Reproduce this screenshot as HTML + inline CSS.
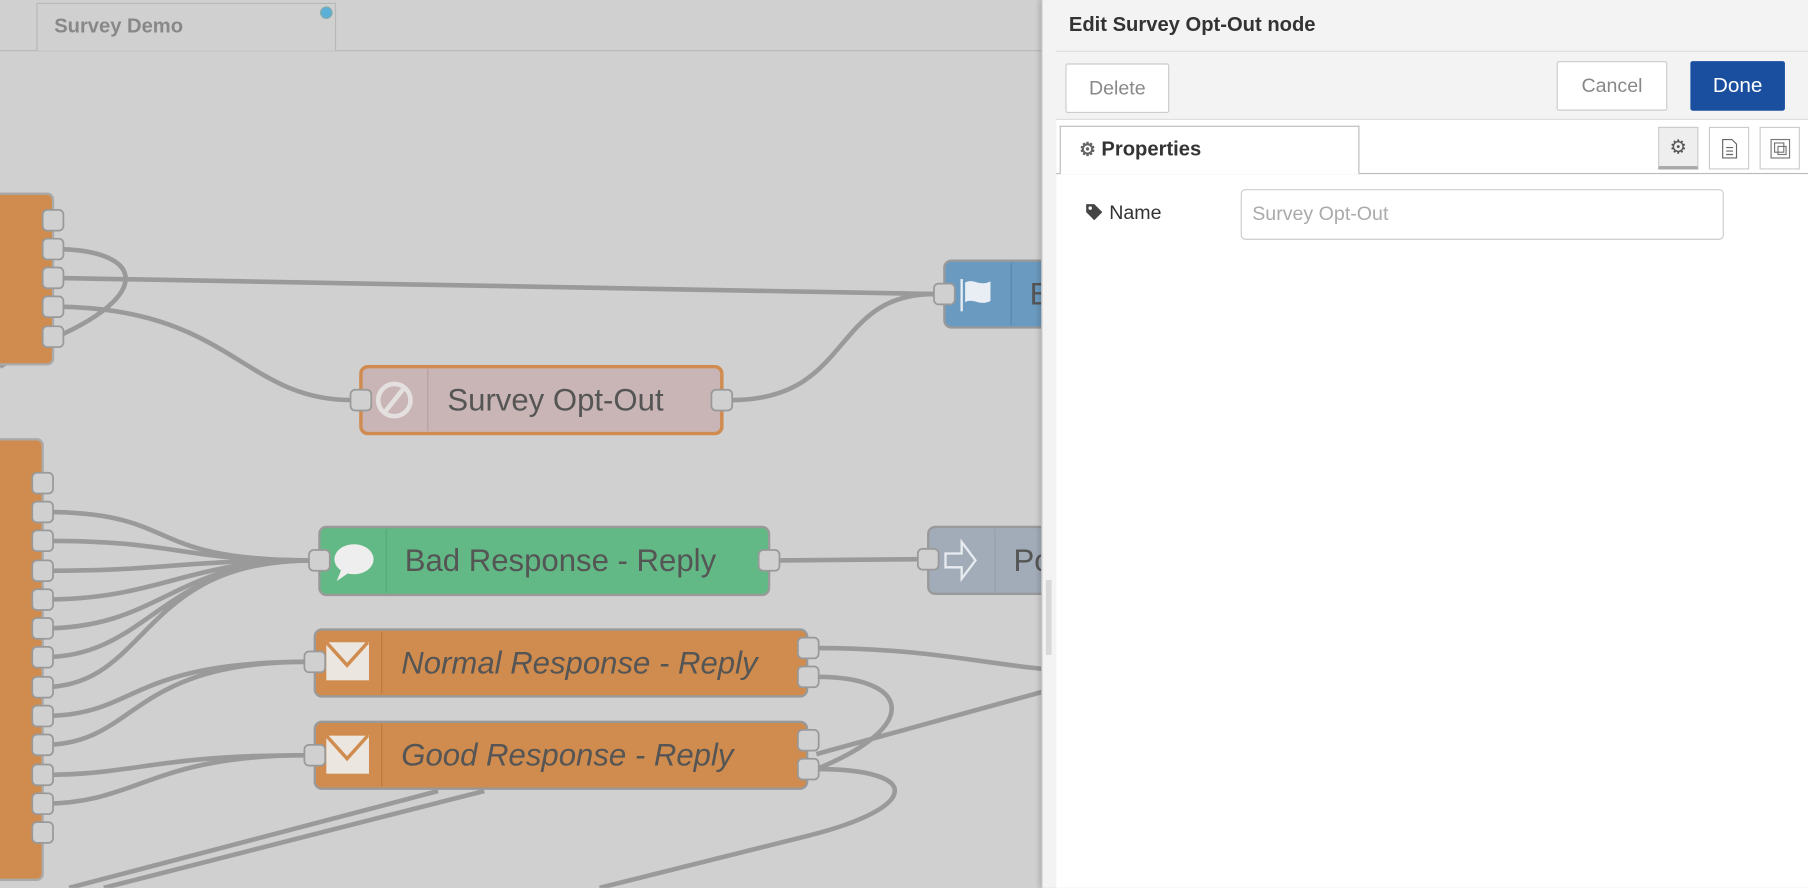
<!DOCTYPE html>
<html><head><meta charset="utf-8"><style>
html,body{margin:0;padding:0;overflow:hidden;width:1808px;height:888px;background:#d0d0d0}
#w{position:absolute;left:0;top:0;width:1568px;height:770px;transform:scale(1.15306);transform-origin:0 0;font-family:"Liberation Sans",sans-serif}
.abs{position:absolute}
.btn{position:absolute;background:#fff;border:1px solid #ccc;box-sizing:border-box;color:#888;font-size:17px;display:flex;align-items:center;justify-content:center;border-radius:2px}
.ib{position:absolute;top:110px;width:35px;height:37px;border:1px solid #ccc;box-sizing:border-box;background:#fff;display:flex;align-items:center;justify-content:center}
</style></head><body><div id="w">
<svg class="abs" style="left:0;top:0" width="904" height="770" viewBox="0 0 904 770">
<rect width="904" height="770" fill="#d0d0d0"/>
<line x1="0" y1="44" x2="904" y2="44" stroke="#b8b8b8"/>
<path d="M32 44V3H291V44" fill="#d0d0d0" stroke="#b8b8b8"/>
<text x="47" y="28" font-size="17.5" font-weight="bold" fill="#888">Survey Demo</text>
<circle cx="283" cy="11" r="5" fill="#5ab0d6" stroke="#8aa" stroke-width="1"/>
<g fill="none" stroke="#9a9a9a" stroke-width="4">
<path d="M46 241 L810 255"/>
<path d="M46 216 C130 216 135 260 30 300 L0 318"/>
<path d="M46 266 C200 266 210 347 305 347"/>
<path d="M634 347 C740 347 720 255 810 255"/>
<path d="M675 486 L798 485"/>
<path d="M37 444 C160 444 120 486 270 486"/>
<path d="M37 469 C160 469 150 486 270 486"/>
<path d="M37 495 C150 495 150 486 270 486"/>
<path d="M37 520 C140 520 160 486 270 486"/>
<path d="M37 545 C140 545 150 486 270 486"/>
<path d="M37 570 C130 570 140 486 270 486"/>
<path d="M37 596 C130 596 120 486 270 486"/>
<path d="M37 621 C120 621 110 574 266 574"/>
<path d="M37 646 C120 646 110 574 266 574"/>
<path d="M37 672 C120 672 130 655 266 655"/>
<path d="M37 697 C120 697 130 655 266 655"/>
<path d="M708 562 C800 562 850 575 904 580"/>
<path d="M708 587 C790 587 800 630 708 667"/>
<path d="M708 667 C800 667 800 700 700 725 L520 770"/>
<path d="M708 654 L904 600"/>
<path d="M60 770 L380 686"/>
<path d="M90 770 L420 686"/>
</g>
<rect x="-10" y="168" width="56" height="148" rx="5" fill="#cf8c4e" stroke="#aaa" stroke-width="2"/>
<rect x="-10" y="381" width="47" height="382" rx="5" fill="#cf8c4e" stroke="#aaa" stroke-width="2"/>
<g fill="#d0d0d0" stroke="#999" stroke-width="1.5">
<rect x="37" y="182" width="18" height="18" rx="4"/><rect x="37" y="207" width="18" height="18" rx="4"/><rect x="37" y="232" width="18" height="18" rx="4"/><rect x="37" y="257" width="18" height="18" rx="4"/><rect x="37" y="283" width="18" height="18" rx="4"/>
<rect x="28" y="410" width="18" height="18" rx="4"/><rect x="28" y="435" width="18" height="18" rx="4"/><rect x="28" y="460" width="18" height="18" rx="4"/><rect x="28" y="486" width="18" height="18" rx="4"/><rect x="28" y="511" width="18" height="18" rx="4"/><rect x="28" y="536" width="18" height="18" rx="4"/><rect x="28" y="561" width="18" height="18" rx="4"/><rect x="28" y="587" width="18" height="18" rx="4"/><rect x="28" y="612" width="18" height="18" rx="4"/><rect x="28" y="637" width="18" height="18" rx="4"/><rect x="28" y="663" width="18" height="18" rx="4"/><rect x="28" y="688" width="18" height="18" rx="4"/><rect x="28" y="713" width="18" height="18" rx="4"/>
</g>
<rect x="313" y="318" width="313" height="58" rx="6" fill="#c9b5b5" stroke="#d08c50" stroke-width="3"/>
<line x1="371" y1="320" x2="371" y2="374" stroke="#b8a0a0"/>
<circle cx="342" cy="347" r="14" fill="none" stroke="#e4e0e0" stroke-width="4"/><line x1="334" y1="357" x2="350" y2="337" stroke="#e4e0e0" stroke-width="4"/>
<text x="388" y="356" font-size="27" fill="#555">Survey Opt-Out</text>
<rect x="819" y="226" width="120" height="58" rx="6" fill="#6a9abf" stroke="#999" stroke-width="2"/>
<line x1="877" y1="228" x2="877" y2="282" stroke="#5a88ae"/>
<path d="M834 242v28" stroke="#e8eef4" stroke-width="2"/><path d="M837 245c8-4 12 4 22-1v17c-10 5-14-3-22 1z" fill="#e8eef4"/>
<text x="893" y="264" font-size="27" fill="#555">E</text>
<rect x="277" y="457" width="390" height="59" rx="6" fill="#62b985" stroke="#999" stroke-width="2"/>
<line x1="335" y1="459" x2="335" y2="514" stroke="#58a878"/>
<ellipse cx="307" cy="485" rx="17" ry="13" fill="#eee"/><path d="M296 494l-4 10 10-7z" fill="#eee"/>
<text x="351" y="495" font-size="27" fill="#555">Bad Response - Reply</text>
<rect x="805" y="457" width="130" height="58" rx="6" fill="#a2acb8" stroke="#999" stroke-width="2"/>
<line x1="863" y1="459" x2="863" y2="513" stroke="#95a0ad"/>
<path d="M820 480h14v-10l12 16-12 16v-10h-14z" fill="none" stroke="#e8ecf0" stroke-width="2"/>
<text x="879" y="495" font-size="27" fill="#555">Po</text>
<rect x="273" y="546" width="427" height="58" rx="6" fill="#cf8c4e" stroke="#999" stroke-width="2"/>
<line x1="331" y1="548" x2="331" y2="602" stroke="#b87a40"/>
<rect x="283" y="557" width="37" height="33" fill="#ece6e0"/><path d="M283 557l18 20 18-20" fill="none" stroke="#cf8c4e" stroke-width="3"/>
<text x="348" y="584" font-size="27" font-style="italic" fill="#555">Normal Response - Reply</text>
<rect x="273" y="626" width="427" height="58" rx="6" fill="#cf8c4e" stroke="#999" stroke-width="2"/>
<line x1="331" y1="628" x2="331" y2="682" stroke="#b87a40"/>
<rect x="283" y="638" width="37" height="33" fill="#ece6e0"/><path d="M283 638l18 20 18-20" fill="none" stroke="#cf8c4e" stroke-width="3"/>
<text x="348" y="664" font-size="27" font-style="italic" fill="#555">Good Response - Reply</text>
<g fill="#d0d0d0" stroke="#999" stroke-width="1.5">
<rect x="304" y="338" width="18" height="18" rx="4"/><rect x="617" y="338" width="18" height="18" rx="4"/>
<rect x="810" y="246" width="18" height="18" rx="4"/>
<rect x="268" y="477" width="18" height="18" rx="4"/><rect x="658" y="477" width="18" height="18" rx="4"/>
<rect x="796" y="476" width="18" height="18" rx="4"/>
<rect x="264" y="565" width="18" height="18" rx="4"/><rect x="692" y="553" width="18" height="18" rx="4"/><rect x="692" y="578" width="18" height="18" rx="4"/>
<rect x="264" y="646" width="18" height="18" rx="4"/><rect x="692" y="633" width="18" height="18" rx="4"/><rect x="692" y="658" width="18" height="18" rx="4"/>
</g>
</svg>
<div class="abs" style="left:903px;top:0;width:12px;height:770px;background:#f3f3f3;border-left:1px solid #bbb;border-right:1px solid #ddd;box-shadow:-2px 0 4px rgba(0,0,0,.15)"></div>
<div class="abs" style="left:907px;top:503px;width:5px;height:65px;background:#d8d8d8"></div>
<div class="abs" style="left:916px;top:0;width:652px;height:770px;background:#fff"></div>
<div class="abs" style="left:916px;top:0;width:652px;height:104px;background:#f3f3f3;border-bottom:1px solid #ddd;box-sizing:border-box"></div>
<div class="abs" style="left:916px;top:44px;width:652px;height:1px;background:#ddd"></div>
<div class="abs" style="left:927px;top:11px;font-size:17.5px;font-weight:bold;color:#333">Edit Survey Opt-Out node</div>
<div class="btn" style="left:924px;top:55px;width:90px;height:43px">Delete</div>
<div class="btn" style="left:1350px;top:53px;width:96px;height:43px">Cancel</div>
<div class="btn" style="left:1466px;top:53px;width:82px;height:43px;background:#1a4fa0;border-color:#1a4fa0;color:#fff;font-size:18px">Done</div>
<div class="abs" style="left:916px;top:150px;width:652px;height:1px;background:#bbb"></div>
<div class="abs" style="left:919px;top:109px;width:260px;height:42px;background:#fff;border:1px solid #bbb;border-bottom:none;box-sizing:border-box"></div>
<div class="abs" style="left:936px;top:119px;font-size:17.5px;font-weight:bold;color:#333"><span style="color:#666;font-size:16px">⚙</span> Properties</div>
<div class="ib" style="left:1438px;background:#eee;border-bottom:3px solid #aaa;color:#555;font-size:17px">⚙</div>
<div class="ib" style="left:1482px"><svg width="14" height="18"><path d="M1 1h8l4 4v12H1z" fill="none" stroke="#666"/><path d="M4 8h6M4 11h6M4 14h6" stroke="#666"/></svg></div>
<div class="ib" style="left:1526px"><svg width="20" height="20"><rect x="2" y="2" width="16" height="16" fill="none" stroke="#777"/><rect x="5" y="5" width="8" height="8" fill="none" stroke="#777"/><rect x="8" y="8" width="7" height="7" fill="none" stroke="#777"/></svg></div>
<div class="abs" style="left:941px;top:175px;font-size:17px;color:#333"><svg width="17" height="16" style="vertical-align:-2px;margin-right:4px"><path d="M1 1h7l7 7-7 7-7-7z" fill="#444"/><circle cx="4.5" cy="4.5" r="1.5" fill="#fff"/></svg>Name</div>
<div class="abs" style="left:1076px;top:164px;width:419px;height:44px;border:1px solid #ccc;border-radius:4px;box-sizing:border-box;padding-left:9px;line-height:42px;font-size:17px;color:#aaa">Survey Opt-Out</div>
</div></body></html>
